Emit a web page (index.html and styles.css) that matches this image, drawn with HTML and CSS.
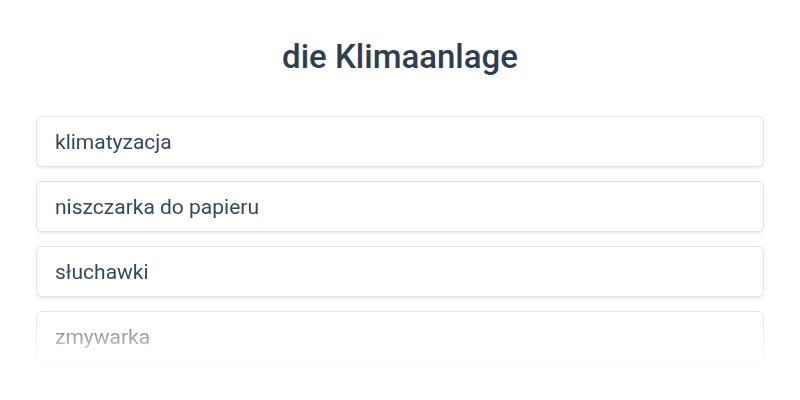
FILE: index.html
```html
<!DOCTYPE html>
<html lang="de">
<head>
<meta charset="utf-8">
<link rel="stylesheet" href="styles.css">
</head>
<body>
<main class="page">
  <h1 class="title">die Klimaanlage</h1>
  <ul class="options">
    <li class="option">klimatyzacja</li>
    <li class="option">niszczarka do papieru</li>
    <li class="option">słuchawki</li>
    <li class="option">zmywarka</li>
  </ul>
</main>
</body>
</html>
```
FILE: styles.css
```css
html, body {
  margin: 0;
  padding: 0;
  background: #ffffff;
  font-family: Roboto, "Liberation Sans", sans-serif;
}
.page {
  padding: 36px 36px 0;
  height: 400px;
  box-sizing: border-box;
  overflow: hidden;
}
.title {
  margin: 0;
  text-align: center;
  font-size: 33px;
  font-weight: 500;
  line-height: 42px;
  color: #2c3e50;
}
.options {
  list-style: none;
  margin: 38px 0 0;
  padding: 0 0 4px;
  display: flex;
  flex-direction: column;
  gap: 14px;
  -webkit-mask-image: linear-gradient(to bottom, #000 0, #000 190px, rgba(0,0,0,0.35) 230px, rgba(0,0,0,0.1) 250px);
  mask-image: linear-gradient(to bottom, #000 0, #000 190px, rgba(0,0,0,0.35) 230px, rgba(0,0,0,0.1) 250px);
}
.option {
  height: 51px;
  box-sizing: border-box;
  display: flex;
  align-items: center;
  padding: 0 18px;
  border: 1px solid #e2e2e2;
  border-radius: 6px;
  box-shadow: 0 1px 3px rgba(0,0,0,0.1);
  font-size: 21px;
  color: #34495e;
  background: #fff;
}
```
